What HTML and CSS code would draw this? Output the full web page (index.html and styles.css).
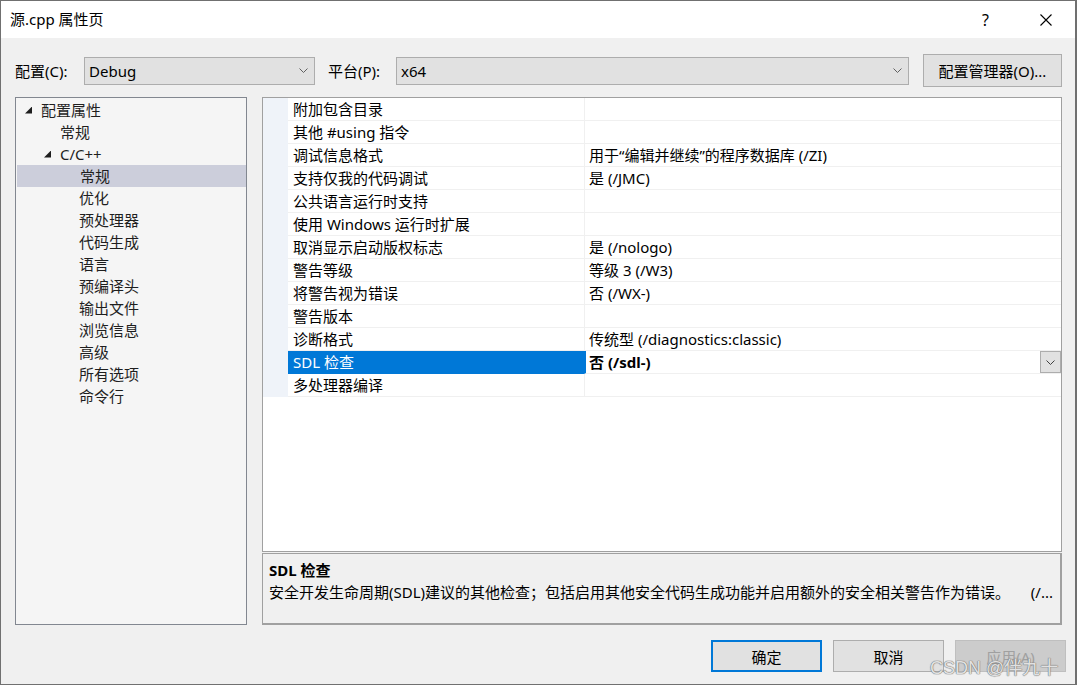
FILE: index.html
```html
<!DOCTYPE html>
<html lang="zh-CN">
<head>
    <meta charset="UTF-8">
    <title>源.cpp 属性页</title>
    <link rel="stylesheet" href="styles.css">
</head>

<body>
<div class="p_window">

    <div class="p_title">
        <span class="p_title_text">源.cpp 属性页</span>
        <span class="p_help">?</span>
        <span class="p_close"><svg width="12" height="12" viewBox="0 0 12 12"><path d="M0.5 0.5 L11.5 11.5 M11.5 0.5 L0.5 11.5" stroke="#000" stroke-width="1.1" fill="none"/></svg></span>
    </div>

    <div class="p_bar">
        <label class="p_label p_label_conf">配置(C):</label>
        <div class="p_combo p_combo_conf"><span>Debug</span><svg class="p_chev" width="9" height="5" viewBox="0 0 9 5"><path d="M0.5 0.5 L4.5 4.5 L8.5 0.5" stroke="#606060" fill="none"/></svg></div>
        <label class="p_label p_label_plat">平台(P):</label>
        <div class="p_combo p_combo_plat"><span>x64</span><svg class="p_chev" width="9" height="5" viewBox="0 0 9 5"><path d="M0.5 0.5 L4.5 4.5 L8.5 0.5" stroke="#606060" fill="none"/></svg></div>
        <button class="p_button p_manager">配置管理器(O)...</button>
    </div>

    <div class="p_main">
        <div class="p_tree">
            <div class="p_node lv0"><i class="p_tri"></i>配置属性</div>
            <div class="p_node lv1">常规</div>
            <div class="p_node lv1t"><i class="p_tri"></i>C/C++</div>
            <div class="p_node lv2 selected">常规</div>
            <div class="p_node lv2">优化</div>
            <div class="p_node lv2">预处理器</div>
            <div class="p_node lv2">代码生成</div>
            <div class="p_node lv2">语言</div>
            <div class="p_node lv2">预编译头</div>
            <div class="p_node lv2">输出文件</div>
            <div class="p_node lv2">浏览信息</div>
            <div class="p_node lv2">高级</div>
            <div class="p_node lv2">所有选项</div>
            <div class="p_node lv2">命令行</div>
        </div>

        <div class="p_right">
            <div class="p_grid">
                <div class="p_row"><div class="p_margin"></div><div class="p_name">附加包含目录</div><div class="p_value"></div></div>
                <div class="p_row"><div class="p_margin"></div><div class="p_name">其他 #using 指令</div><div class="p_value"></div></div>
                <div class="p_row"><div class="p_margin"></div><div class="p_name">调试信息格式</div><div class="p_value">用于“编辑并继续”的程序数据库 (/ZI)</div></div>
                <div class="p_row"><div class="p_margin"></div><div class="p_name">支持仅我的代码调试</div><div class="p_value">是 (/JMC)</div></div>
                <div class="p_row"><div class="p_margin"></div><div class="p_name">公共语言运行时支持</div><div class="p_value"></div></div>
                <div class="p_row"><div class="p_margin"></div><div class="p_name">使用 Windows 运行时扩展</div><div class="p_value"></div></div>
                <div class="p_row"><div class="p_margin"></div><div class="p_name">取消显示启动版权标志</div><div class="p_value">是 (/nologo)</div></div>
                <div class="p_row"><div class="p_margin"></div><div class="p_name">警告等级</div><div class="p_value">等级 3 (/W3)</div></div>
                <div class="p_row"><div class="p_margin"></div><div class="p_name">将警告视为错误</div><div class="p_value">否 (/WX-)</div></div>
                <div class="p_row"><div class="p_margin"></div><div class="p_name">警告版本</div><div class="p_value"></div></div>
                <div class="p_row"><div class="p_margin"></div><div class="p_name">诊断格式</div><div class="p_value">传统型 (/diagnostics:classic)</div></div>
                <div class="p_row selected"><div class="p_margin"></div><div class="p_name">SDL 检查</div><div class="p_value"><b>否 (/sdl-)</b><span class="p_drop"><svg width="9" height="5" viewBox="0 0 9 5"><path d="M0.5 0.5 L4.5 4.5 L8.5 0.5" stroke="#404040" fill="none"/></svg></span></div></div>
                <div class="p_row"><div class="p_margin"></div><div class="p_name">多处理器编译</div><div class="p_value"></div></div>
            </div>
            <div class="p_desc">
                <div class="p_desc_title">SDL 检查</div>
                <div class="p_desc_text"><span>安全开发生命周期(SDL)建议的其他检查；包括启用其他安全代码生成功能并启用额外的安全相关警告作为错误。</span><span>(/...</span></div>
            </div>
        </div>
    </div>

    <div class="p_foot">
        <button class="p_button p_btn default">确定</button>
        <button class="p_button p_btn">取消</button>
        <button class="p_button p_btn disabled">应用(A)</button>
        <span class="p_mark">CSDN @伴九十</span>
    </div>

</div>
</body>
</html>
```

FILE: styles.css
```css
* {margin: 0;padding: 0;box-sizing: border-box;}
body {font-family: "Noto Sans", "Noto Sans CJK SC", sans-serif; font-size: 15px; color: #000; background: #fff;}

.p_window {position: relative; width: 1077px; height: 685px; border: 1px solid #707070; border-right-width: 2px; background: #f0f0f0;}

.p_title {display: flex; align-items: center; height: 37px; background: #fff; padding-left: 9px;}
.p_title_text {flex: 1; font-size: 15px; line-height: 37px;}
.p_help {width: 58px; text-align: left; font-size: 16px; color: #000;}
.p_close {display: flex; width: 35px; align-items: center;}

.p_bar {display: flex; align-items: center; height: 33px; margin-top: 16px; padding-left: 14px;}
.p_label {display: block; line-height: 28px;}
.p_label_conf {width: 69px;}
.p_label_plat {width: 68px; margin-left: 13px;}
.p_combo {display: flex; align-items: center; justify-content: space-between; height: 28px; padding: 0 6px 0 4px; background: #e1e1e1; border: 1px solid #adadad;}
.p_combo_conf {width: 231px;}
.p_combo_plat {width: 513px;}
.p_button {font-family: inherit; font-size: 15px; color: #000; background: #e1e1e1; border: 1px solid #adadad; outline: none;}
.p_manager {width: 139px; height: 33px; margin-left: 14px;}

.p_main {display: flex; height: 528px; margin-top: 10px; padding-left: 14px;}
.p_tree {width: 232px; background: #f5f5f5; border: 1px solid #828790; padding-top: 1px; color: #1e1e1e;}
.p_node {display: flex; align-items: center; height: 22px; line-height: 22px; white-space: nowrap;}
.p_node.lv0 {padding-left: 9px;}
.p_node.lv1 {padding-left: 44px;}
.p_node.lv1t {padding-left: 28px;}
.p_node.lv2 {padding-left: 63px;}
.p_node.selected {background: #cccedb; margin: 0 0 0 1px;}
.p_tri {display: block; width: 7px; height: 7px; margin-right: 9px; background: #1e1e1e; clip-path: polygon(100% 0, 100% 100%, 0 100%);}

.p_right {display: flex; flex-direction: column; width: 800px; margin-left: 15px;}
.p_grid {height: 455px; background: #fff; border: 1px solid #a0a0a0;}
.p_row {display: grid; grid-template-columns: 25px 296px 1fr; height: 23px;}
.p_margin {background: #eff3f9;}
.p_name, .p_value {height: 23px; line-height: 22px; border-bottom: 1px solid #f0f0f0; padding-left: 5px; white-space: nowrap;}
.p_value {display: flex; align-items: center; border-left: 1px solid #f0f0f0; padding-left: 4px; padding-right: 0;}
.p_row.selected .p_name {background: #0078d7; color: #fff; border-bottom-color: #0078d7;}
.p_row.selected .p_value {border-left: 2px solid #0078d7; padding-left: 3px;}
.p_drop {display: flex; align-items: center; justify-content: center; width: 21px; height: 22px; margin-left: auto; background: #e1e1e1; border: 1px solid #adadad;}

.p_desc {height: 72px; margin-top: 1px; padding: 5px 7px 0 6px; background: #f0f0f0; border: 1px solid #a0a0a0; border-bottom-width: 2px; border-right-width: 2px;}
.p_desc_title {font-weight: bold; line-height: 22px;}
.p_desc_text {display: flex; justify-content: space-between; line-height: 22px; white-space: nowrap;}

.p_foot {display: flex; justify-content: flex-end; gap: 11px; margin-top: 15px; padding-right: 9px;}
.p_btn {width: 111px; height: 32px;}
.p_btn.default {border: 2px solid #0078d7;}
.p_btn.disabled {background: #cccccc; border-color: #bfbfbf; color: #a0a0a0;}
.p_mark {position: absolute; left: 929px; top: 652px; font-family: "Liberation Sans", "Noto Sans CJK SC", sans-serif; font-size: 18px; color: rgba(240, 240, 240, 0.9); text-shadow: 0 0 1px #7a7a7a, 0 0 1px #7a7a7a, 0 0 1px #7a7a7a; white-space: nowrap;}
```
